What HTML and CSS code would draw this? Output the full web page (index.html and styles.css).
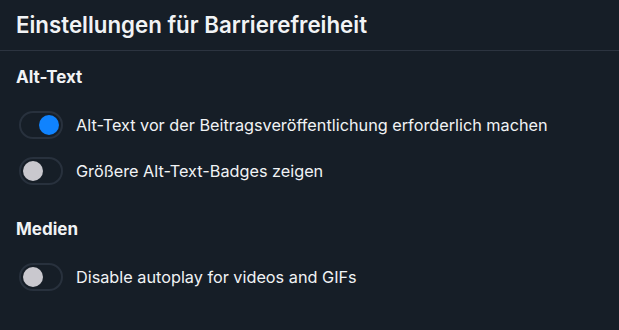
FILE: index.html
```html
<!DOCTYPE html>
<html lang="de">
<head>
<meta charset="utf-8">
<link rel="stylesheet" href="styles.css">
</head>
<body>
<header class="header"><h1 class="title">Einstellungen für Barrierefreiheit</h1></header>
<section class="section">
  <h2 class="heading">Alt-Text</h2>
  <div class="rows">
    <label class="row"><span class="toggle on"><span class="knob"></span></span><span class="label">Alt-Text vor der Beitragsveröffentlichung erforderlich machen</span></label>
    <label class="row"><span class="toggle"><span class="knob"></span></span><span class="label">Größere Alt-Text-Badges zeigen</span></label>
  </div>
</section>
<section class="section second">
  <h2 class="heading">Medien</h2>
  <div class="rows">
    <label class="row"><span class="toggle"><span class="knob"></span></span><span class="label">Disable autoplay for videos and GIFs</span></label>
  </div>
</section>
</body>
</html>
```
FILE: styles.css
```css
html, body {
  margin: 0;
  padding: 0;
  background: #161e27;
  color: #f1f3f5;
  font-family: Inter, "Noto Sans", sans-serif;
}
.header {
  height: 50px;
  border-bottom: 1px solid #2c3440;
  display: flex;
  align-items: center;
  padding: 0 16px;
}
.title {
  margin: 0;
  font-size: 22.3px;
  font-weight: 600;
  line-height: 28px;
}
.section {
  padding: 14px 16px 0 19px;
}
.second {
  padding-top: 32px;
}
.heading {
  margin: 0 0 22px -3px;
  font-size: 17px;
  font-weight: 700;
  line-height: 24px;
}
.rows {
  display: flex;
  flex-direction: column;
  gap: 18px;
}
.row {
  display: flex;
  align-items: center;
  gap: 13px;
}
.toggle {
  box-sizing: border-box;
  width: 44px;
  height: 28px;
  border: 2px solid #28313d;
  border-radius: 14px;
  display: flex;
  align-items: center;
  padding: 0 2px;
}
.toggle.on {
  justify-content: flex-end;
}
.knob {
  width: 20px;
  height: 20px;
  border-radius: 50%;
  background: #c9c8ce;
}
.toggle.on .knob {
  background: #1083fe;
}
.label {
  font-size: 16.25px;
  line-height: 20px;
}
```
